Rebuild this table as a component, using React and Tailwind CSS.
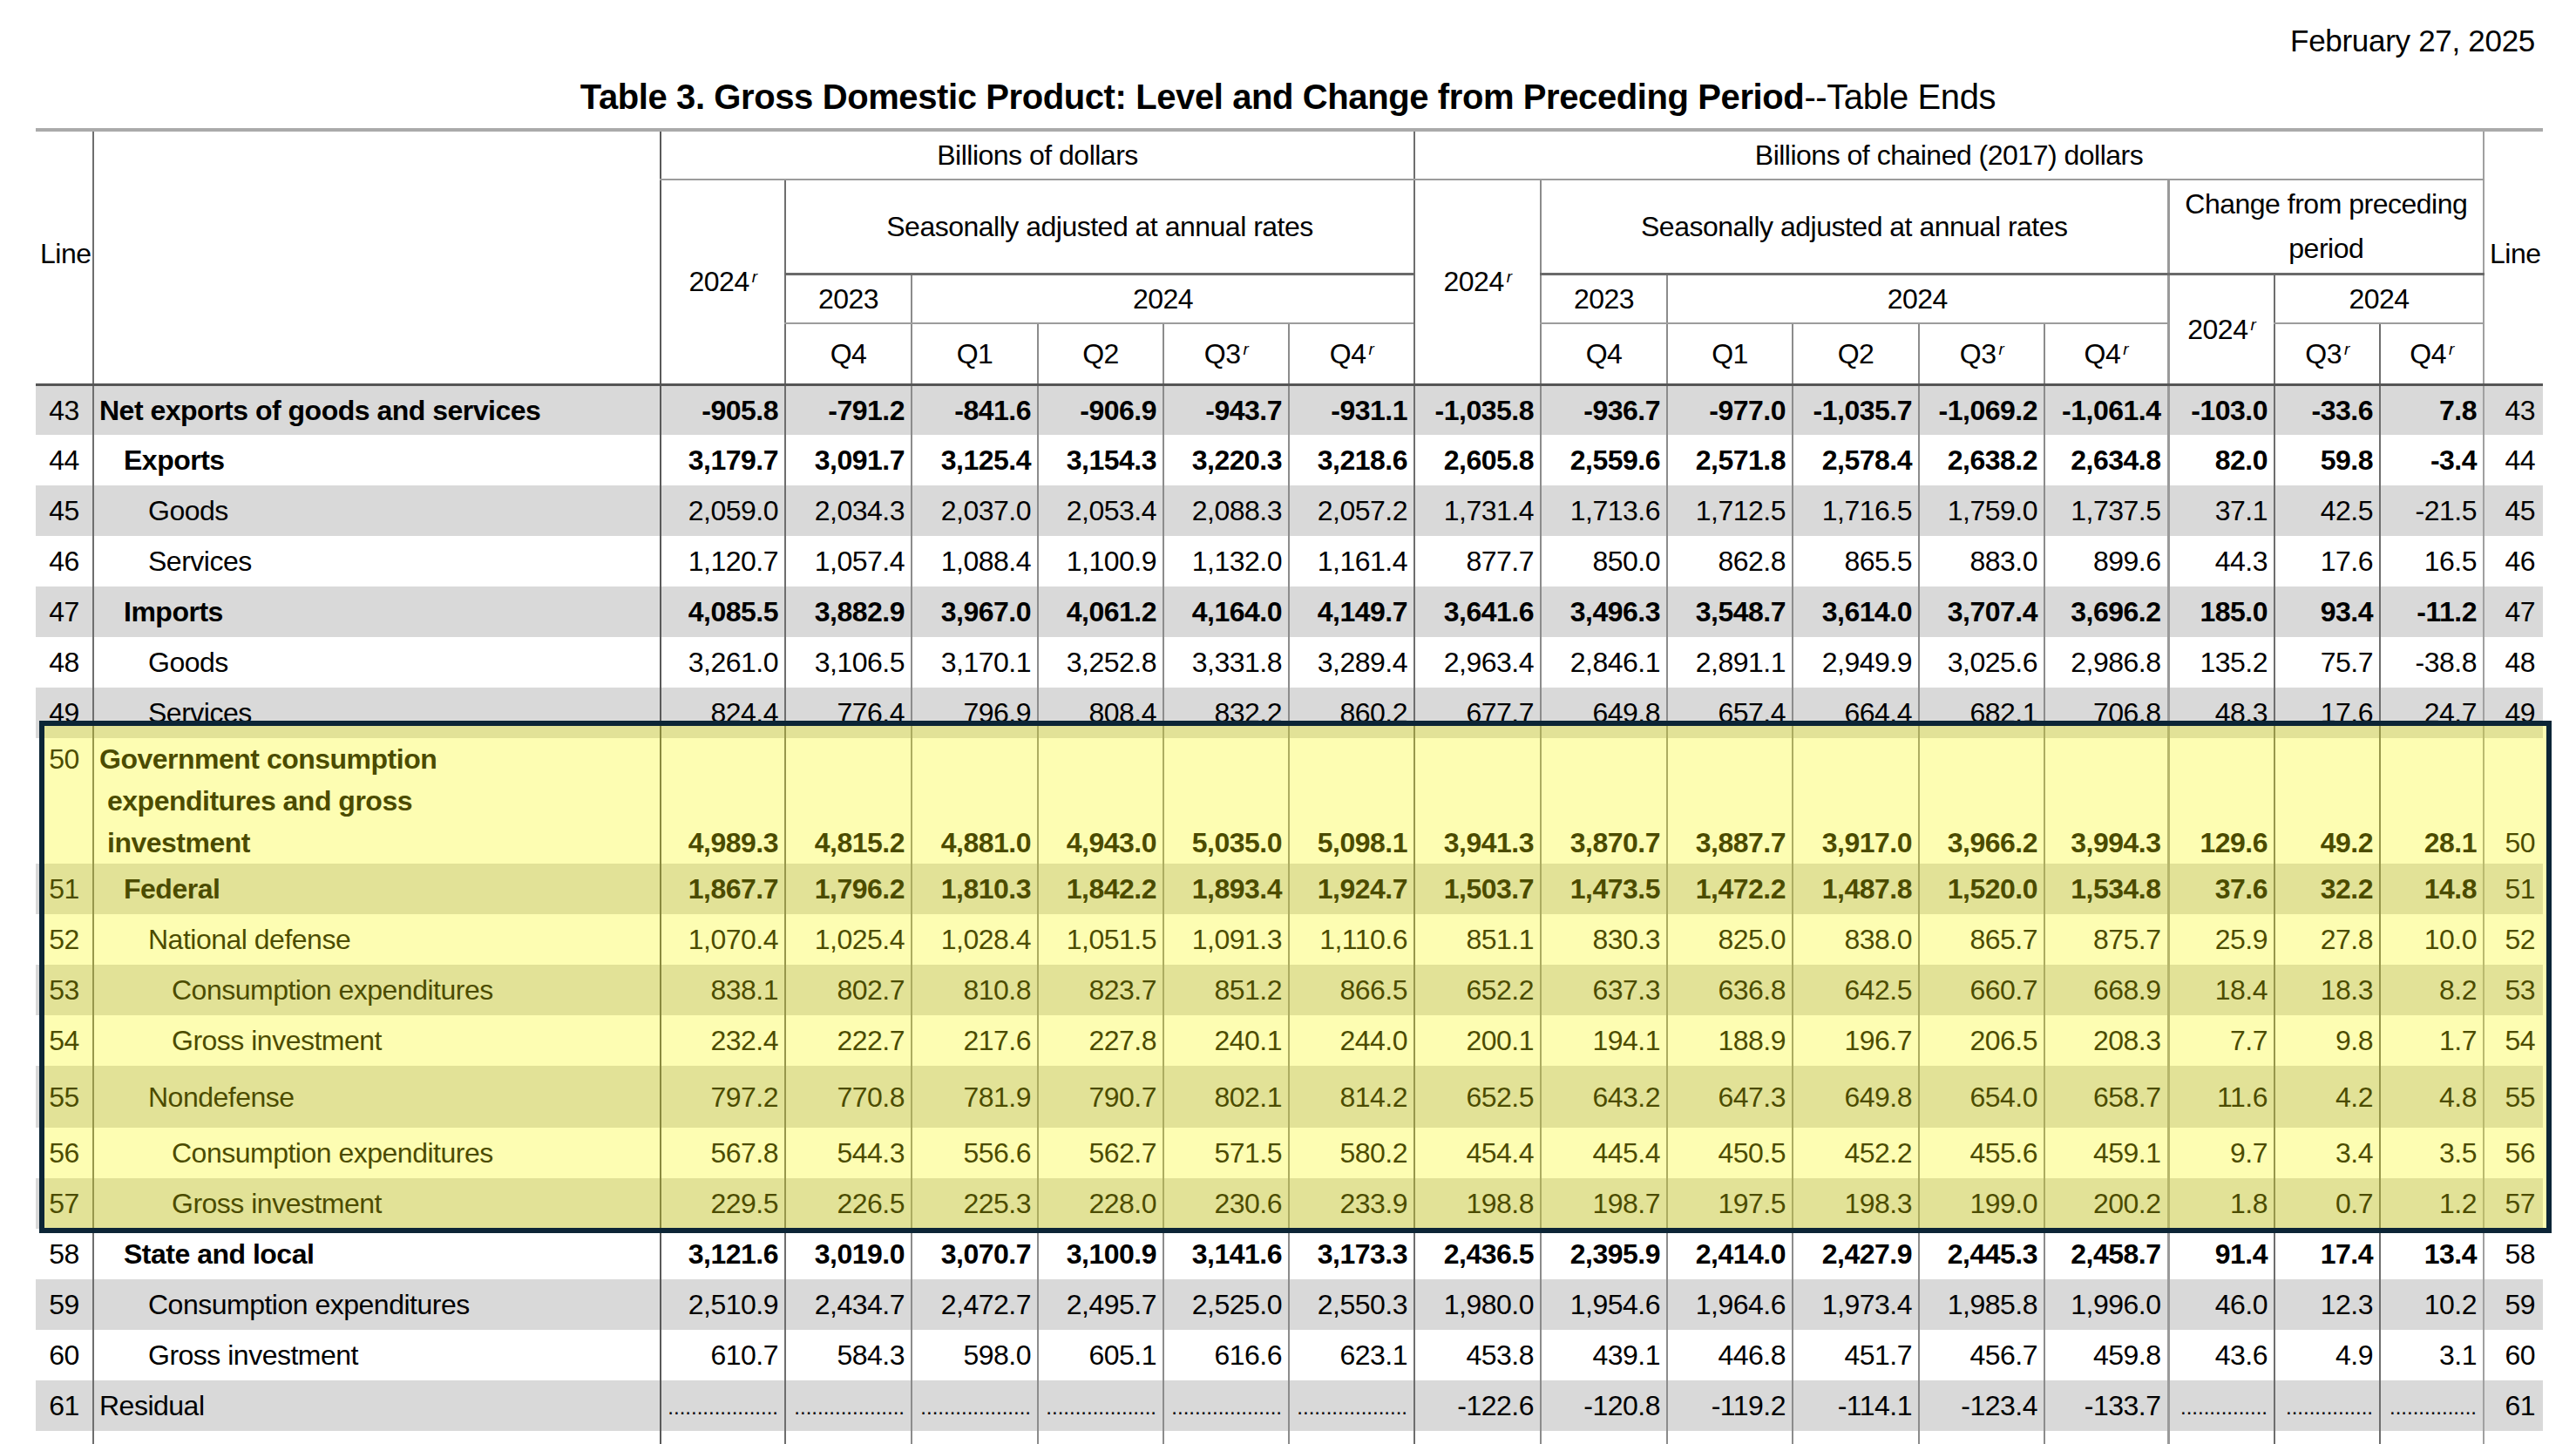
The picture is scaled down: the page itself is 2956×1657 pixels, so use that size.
import React from 'react';

// left border of every column (index 0 = "Line" column has none)
const colBorder = [
  '',
  'border-l-2 border-l-[#6e6e6e]',
  'border-l-2 border-l-[#5a5a5a]',
  'border-l-2 border-l-[#6e6e6e]',
  'border-l-2 border-l-[#8c8c8c]',
  'border-l-2 border-l-[#8c8c8c]',
  'border-l-2 border-l-[#8c8c8c]',
  'border-l-2 border-l-[#8c8c8c]',
  'border-l-2 border-l-[#6e6e6e]',
  'border-l-2 border-l-[#8c8c8c]',
  'border-l-2 border-l-[#8c8c8c]',
  'border-l-2 border-l-[#8c8c8c]',
  'border-l-2 border-l-[#8c8c8c]',
  'border-l-2 border-l-[#8c8c8c]',
  'border-l-[3px] border-l-[#9a9a9a]',
  'border-l-2 border-l-[#6e6e6e]',
  'border-l-2 border-l-[#6e6e6e]',
  'border-l-2 border-l-[#a0a0a0]',
];

const colWidths = [66, 651, 143, 145, 145, 144, 144, 144, 145, 145, 144, 145, 144, 142, 122, 121, 119, 68];

const indent = ['pl-[6px]', 'pl-[34px]', 'pl-[62px]', 'pl-[89px]'];

const rows = [
  { line: 43, label: 'Net exports of goods and services', level: 0, bold: true,
    v: ['-905.8', '-791.2', '-841.6', '-906.9', '-943.7', '-931.1', '-1,035.8', '-936.7', '-977.0', '-1,035.7', '-1,069.2', '-1,061.4', '-103.0', '-33.6', '7.8'] },
  { line: 44, label: 'Exports', level: 1, bold: true,
    v: ['3,179.7', '3,091.7', '3,125.4', '3,154.3', '3,220.3', '3,218.6', '2,605.8', '2,559.6', '2,571.8', '2,578.4', '2,638.2', '2,634.8', '82.0', '59.8', '-3.4'] },
  { line: 45, label: 'Goods', level: 2,
    v: ['2,059.0', '2,034.3', '2,037.0', '2,053.4', '2,088.3', '2,057.2', '1,731.4', '1,713.6', '1,712.5', '1,716.5', '1,759.0', '1,737.5', '37.1', '42.5', '-21.5'] },
  { line: 46, label: 'Services', level: 2,
    v: ['1,120.7', '1,057.4', '1,088.4', '1,100.9', '1,132.0', '1,161.4', '877.7', '850.0', '862.8', '865.5', '883.0', '899.6', '44.3', '17.6', '16.5'] },
  { line: 47, label: 'Imports', level: 1, bold: true,
    v: ['4,085.5', '3,882.9', '3,967.0', '4,061.2', '4,164.0', '4,149.7', '3,641.6', '3,496.3', '3,548.7', '3,614.0', '3,707.4', '3,696.2', '185.0', '93.4', '-11.2'] },
  { line: 48, label: 'Goods', level: 2,
    v: ['3,261.0', '3,106.5', '3,170.1', '3,252.8', '3,331.8', '3,289.4', '2,963.4', '2,846.1', '2,891.1', '2,949.9', '3,025.6', '2,986.8', '135.2', '75.7', '-38.8'] },
  { line: 49, label: 'Services', level: 2,
    v: ['824.4', '776.4', '796.9', '808.4', '832.2', '860.2', '677.7', '649.8', '657.4', '664.4', '682.1', '706.8', '48.3', '17.6', '24.7'] },
  { line: 50, label: ['Government consumption', 'expenditures and gross', 'investment'], level: 0, bold: true, tall: true,
    v: ['4,989.3', '4,815.2', '4,881.0', '4,943.0', '5,035.0', '5,098.1', '3,941.3', '3,870.7', '3,887.7', '3,917.0', '3,966.2', '3,994.3', '129.6', '49.2', '28.1'] },
  { line: 51, label: 'Federal', level: 1, bold: true,
    v: ['1,867.7', '1,796.2', '1,810.3', '1,842.2', '1,893.4', '1,924.7', '1,503.7', '1,473.5', '1,472.2', '1,487.8', '1,520.0', '1,534.8', '37.6', '32.2', '14.8'] },
  { line: 52, label: 'National defense', level: 2,
    v: ['1,070.4', '1,025.4', '1,028.4', '1,051.5', '1,091.3', '1,110.6', '851.1', '830.3', '825.0', '838.0', '865.7', '875.7', '25.9', '27.8', '10.0'] },
  { line: 53, label: 'Consumption expenditures', level: 3,
    v: ['838.1', '802.7', '810.8', '823.7', '851.2', '866.5', '652.2', '637.3', '636.8', '642.5', '660.7', '668.9', '18.4', '18.3', '8.2'] },
  { line: 54, label: 'Gross investment', level: 3,
    v: ['232.4', '222.7', '217.6', '227.8', '240.1', '244.0', '200.1', '194.1', '188.9', '196.7', '206.5', '208.3', '7.7', '9.8', '1.7'] },
  { line: 55, label: 'Nondefense', level: 2, mid: true,
    v: ['797.2', '770.8', '781.9', '790.7', '802.1', '814.2', '652.5', '643.2', '647.3', '649.8', '654.0', '658.7', '11.6', '4.2', '4.8'] },
  { line: 56, label: 'Consumption expenditures', level: 3,
    v: ['567.8', '544.3', '556.6', '562.7', '571.5', '580.2', '454.4', '445.4', '450.5', '452.2', '455.6', '459.1', '9.7', '3.4', '3.5'] },
  { line: 57, label: 'Gross investment', level: 3,
    v: ['229.5', '226.5', '225.3', '228.0', '230.6', '233.9', '198.8', '198.7', '197.5', '198.3', '199.0', '200.2', '1.8', '0.7', '1.2'] },
  { line: 58, label: 'State and local', level: 1, bold: true,
    v: ['3,121.6', '3,019.0', '3,070.7', '3,100.9', '3,141.6', '3,173.3', '2,436.5', '2,395.9', '2,414.0', '2,427.9', '2,445.3', '2,458.7', '91.4', '17.4', '13.4'] },
  { line: 59, label: 'Consumption expenditures', level: 2,
    v: ['2,510.9', '2,434.7', '2,472.7', '2,495.7', '2,525.0', '2,550.3', '1,980.0', '1,954.6', '1,964.6', '1,973.4', '1,985.8', '1,996.0', '46.0', '12.3', '10.2'] },
  { line: 60, label: 'Gross investment', level: 2,
    v: ['610.7', '584.3', '598.0', '605.1', '616.6', '623.1', '453.8', '439.1', '446.8', '451.7', '456.7', '459.8', '43.6', '4.9', '3.1'] },
  { line: 61, label: 'Residual', level: 0,
    v: [null, null, null, null, null, null, '-122.6', '-120.8', '-119.2', '-114.1', '-123.4', '-133.7', null, null, null] },
];

const R = () => (
  <span className="ml-[3px] align-[10px] text-[19px] italic leading-none">r</span>
);

const Dots = ({ wide }) => (
  <span className="text-[24px] tracking-normal">{wide ? '...................' : '...............'}</span>
);

const HEAD_BOTTOM = 'border-b-[3px] border-b-[#555]';
const SUB_LINE = 'border-b-2 border-b-[#9c9c9c]';
const MID_LINE = 'border-b-[3px] border-b-[#6a6a6a]';

const DataRow = ({ row, index }) => {
  const bg = index % 2 === 0 ? 'bg-[#d9d9d9]' : 'bg-white';
  const height = row.tall ? 'h-[143px]' : row.mid ? 'h-[71px]' : 'h-[58px]';
  const weight = row.bold ? 'font-bold' : 'font-normal';
  const valAlign = row.tall ? 'align-bottom leading-[48px]' : 'align-middle leading-[36px]';
  const topAlign = row.tall ? 'align-top leading-[48px]' : 'align-middle leading-[36px]';

  return (
    <tr className={`${height} ${bg}`}>
      <td className={`text-center font-normal ${topAlign}`}>{row.line}</td>
      <td className={`${colBorder[1]} ${indent[row.level]} ${weight} ${topAlign}`}>
        {Array.isArray(row.label) ? (
          <div>
            <div>{row.label[0]}</div>
            <div className="pl-[9px]">{row.label[1]}</div>
            <div className="pl-[9px]">{row.label[2]}</div>
          </div>
        ) : (
          row.label
        )}
      </td>
      {row.v.map((val, i) => (
        <td key={i} className={`${colBorder[i + 2]} pr-[7px] text-right ${weight} ${valAlign}`}>
          {val === null ? <Dots wide={i < 6} /> : val}
        </td>
      ))}
      <td className={`${colBorder[17]} pr-[9px] text-right font-normal ${valAlign}`}>{row.line}</td>
    </tr>
  );
};

const App = () => {
  return (
    <div className="relative h-[1657px] w-[2956px] overflow-hidden bg-white font-['Liberation_Sans',Arial,sans-serif] text-black">
      <div className="mt-[26px] h-[42px] pr-[47px] text-right text-[35px] leading-[42px] tracking-[-0.3px]">February 27, 2025</div>
      <div className="mt-[19px] h-[48px] text-center text-[40px] leading-[48px] tracking-[-0.4px]">
        <span className="font-bold">Table 3. Gross Domestic Product: Level and Change from Preceding Period</span>
        --Table Ends
      </div>

      <table className="ml-[41px] mt-[12px] w-[2877px] table-fixed border-collapse border-t-4 border-t-[#aaaaaa] text-[32px] tracking-[-0.5px]">
        <colgroup>
          {colWidths.map((w, i) => (
            <col key={i} style={{ width: w }} />
          ))}
        </colgroup>
        <thead>
          <tr className="h-[57px]">
            <th rowSpan={4} className={`pb-[8px] pl-[5px] text-left font-normal ${HEAD_BOTTOM}`}>Line</th>
            <th rowSpan={4} className={`${colBorder[1]} ${HEAD_BOTTOM}`}></th>
            <th colSpan={6} className={`${colBorder[2]} ${SUB_LINE} font-normal`}>Billions of dollars</th>
            <th colSpan={9} className={`${colBorder[8]} ${SUB_LINE} font-normal`}>Billions of chained (2017) dollars</th>
            <th rowSpan={4} className={`${colBorder[17]} ${HEAD_BOTTOM} pb-[8px] pl-[6px] text-left font-normal`}>Line</th>
          </tr>
          <tr className="h-[108px]">
            <th rowSpan={3} className={`${colBorder[2]} ${HEAD_BOTTOM} font-normal`}>2024<R /></th>
            <th colSpan={5} className={`${colBorder[3]} ${MID_LINE} font-normal`}>Seasonally adjusted at annual rates</th>
            <th rowSpan={3} className={`${colBorder[8]} ${HEAD_BOTTOM} font-normal`}>2024<R /></th>
            <th colSpan={5} className={`${colBorder[9]} ${MID_LINE} font-normal`}>Seasonally adjusted at annual rates</th>
            <th colSpan={3} className={`${colBorder[14]} ${MID_LINE} font-normal leading-[51px]`}>
              Change from preceding
              <br />
              period
            </th>
          </tr>
          <tr className="h-[57px]">
            <th className={`${colBorder[3]} ${SUB_LINE} font-normal`}>2023</th>
            <th colSpan={4} className={`${colBorder[4]} ${SUB_LINE} font-normal`}>2024</th>
            <th className={`${colBorder[9]} ${SUB_LINE} font-normal`}>2023</th>
            <th colSpan={4} className={`${colBorder[10]} ${SUB_LINE} font-normal`}>2024</th>
            <th rowSpan={2} className={`${colBorder[14]} ${HEAD_BOTTOM} font-normal`}>2024<R /></th>
            <th colSpan={2} className={`${colBorder[15]} ${SUB_LINE} font-normal`}>2024</th>
          </tr>
          <tr className="h-[70px]">
            <th className={`${colBorder[3]} ${HEAD_BOTTOM} font-normal`}>Q4</th>
            <th className={`${colBorder[4]} ${HEAD_BOTTOM} font-normal`}>Q1</th>
            <th className={`${colBorder[5]} ${HEAD_BOTTOM} font-normal`}>Q2</th>
            <th className={`${colBorder[6]} ${HEAD_BOTTOM} font-normal`}>Q3<R /></th>
            <th className={`${colBorder[7]} ${HEAD_BOTTOM} font-normal`}>Q4<R /></th>
            <th className={`${colBorder[9]} ${HEAD_BOTTOM} font-normal`}>Q4</th>
            <th className={`${colBorder[10]} ${HEAD_BOTTOM} font-normal`}>Q1</th>
            <th className={`${colBorder[11]} ${HEAD_BOTTOM} font-normal`}>Q2</th>
            <th className={`${colBorder[12]} ${HEAD_BOTTOM} font-normal`}>Q3<R /></th>
            <th className={`${colBorder[13]} ${HEAD_BOTTOM} font-normal`}>Q4<R /></th>
            <th className={`${colBorder[15]} ${HEAD_BOTTOM} font-normal`}>Q3<R /></th>
            <th className={`${colBorder[16]} ${HEAD_BOTTOM} font-normal`}>Q4<R /></th>
          </tr>
        </thead>
        <tbody>
          {rows.map((row, index) => (
            <DataRow key={row.line} row={row} index={index} />
          ))}
          <tr className="h-[58px] bg-white">
            {colBorder.map((b, i) => (
              <td key={i} className={b}></td>
            ))}
          </tr>
        </tbody>
      </table>

      {/* highlight box laid over lines 50-57 */}
      <div className="pointer-events-none absolute left-[45px] top-[827px] h-[588px] w-[2883px] border-[6px] border-[#0c2536] bg-[rgba(250,250,0,0.3)]"></div>
    </div>
  );
};

export default App;
